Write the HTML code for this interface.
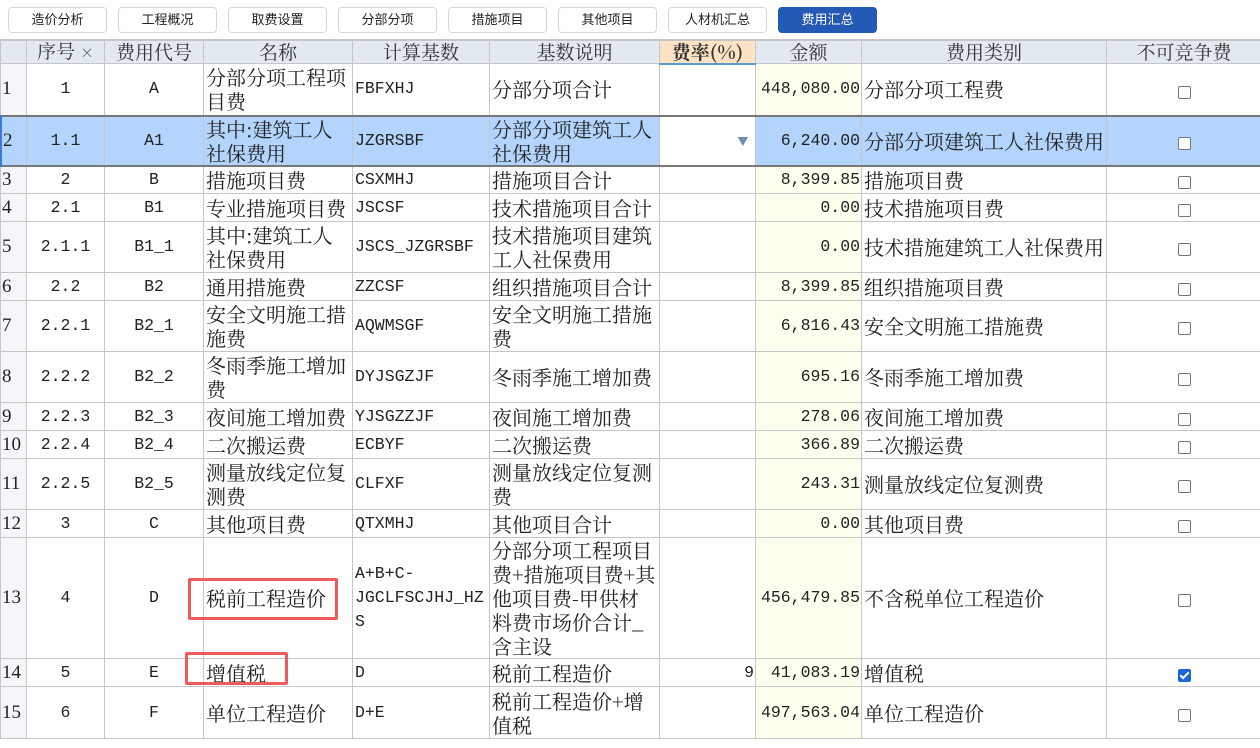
<!DOCTYPE html>
<html><head><meta charset="utf-8"><style>
*{box-sizing:border-box;margin:0;padding:0}
body{width:1260px;height:748px;background:#fff;position:relative;overflow:hidden;font-family:"Noto Serif CJK SC","Liberation Serif",serif;}
.btn{position:absolute;top:7px;width:99px;height:26px;border:1px solid #d6d6d6;border-radius:4px;background:#fff;font:13px "Liberation Sans","Noto Sans CJK SC",sans-serif;color:#222;text-align:center;line-height:24px}
.btn.on{background:#2559b6;color:#fff;border-color:#2559b6}
table{position:absolute;left:-1px;top:39px;border-collapse:collapse;table-layout:fixed;width:1261px}
td{border:1px solid #c6c6c6;font-size:20px;line-height:24px;color:#222;padding:0 2px;overflow:hidden;vertical-align:middle;word-break:break-all}
.m{font-family:"Liberation Mono","Noto Serif CJK SC",monospace;font-size:16.5px;white-space:nowrap}
.c{text-align:center}.r{text-align:right;padding-right:1px}
tr.h td{background:#e3e9f1;text-align:center;height:23px;line-height:20px;font-size:19px;color:#333;border-top:2px solid #c6c6c6;white-space:nowrap}
td.n{background:#f4f6f9;text-align:left;padding-left:1px;font-family:"Liberation Serif",serif;font-size:19px}
td.a{background:#fffff0}
tr.sel td{background:#b3d4fc;border-top:2px solid #777;border-bottom:2px solid #777}
tr.sel td.w{background:#fff}
.cb{display:inline-block;width:13px;height:13px;border:1px solid #777;border-radius:2px;background:#fff;vertical-align:middle}
.cb.k{background:#1a66d6;border-color:#1a66d6;position:relative}
.cb.k:after{content:"";position:absolute;left:3.5px;top:0.5px;width:3px;height:7px;border:solid #fff;border-width:0 2px 2px 0;transform:rotate(45deg)}
.red{position:absolute;border:3px solid #ef5a5a;border-radius:2px}
</style></head><body>
<div class="btn" style="left:8px">造价分析</div>
<div class="btn" style="left:118px">工程概况</div>
<div class="btn" style="left:228px">取费设置</div>
<div class="btn" style="left:338px">分部分项</div>
<div class="btn" style="left:448px">措施项目</div>
<div class="btn" style="left:558px">其他项目</div>
<div class="btn" style="left:668px">人材机汇总</div>
<div class="btn on" style="left:778px">费用汇总</div>
<table>
<colgroup><col style="width:26px"><col style="width:78px"><col style="width:99px"><col style="width:149px"><col style="width:137px"><col style="width:170px"><col style="width:96px"><col style="width:106px"><col style="width:245px"><col style="width:155px"></colgroup>
<tr class="h"><td></td><td>序号 <span style="font-size:14px">×</span></td><td>费用代号</td><td>名称</td><td>计算基数</td><td>基数说明</td><td style="background:#fde3c4;border-bottom:2px solid #5b9bd5;font-weight:bold">费率(%)</td><td>金额</td><td>费用类别</td><td>不可竞争费</td></tr>
<tr style="height:52px"><td class="n">1</td><td class="c m">1</td><td class="c m">A</td><td>分部分项工程项目费</td><td class="m">FBFXHJ</td><td>分部分项合计</td><td></td><td class="a r m">448,080.00</td><td>分部分项工程费</td><td class="c"><span class="cb"></span></td></tr>
<tr class="sel" style="height:49px"><td class="n" style="border-left:3px solid #3a7bd5">2</td><td class="c m">1.1</td><td class="c m">A1</td><td>其中:建筑工人社保费用</td><td class="m">JZGRSBF</td><td>分部分项建筑工人社保费用</td><td class="w r" style="color:#6a8fb5;font-size:11px">▼&nbsp;&nbsp;</td><td class="r m">6,240.00</td><td style="white-space:nowrap">分部分项建筑工人社保费用</td><td class="c"><span class="cb"></span></td></tr>
<tr style="height:28px"><td class="n">3</td><td class="c m">2</td><td class="c m">B</td><td>措施项目费</td><td class="m">CSXMHJ</td><td>措施项目合计</td><td></td><td class="a r m">8,399.85</td><td>措施项目费</td><td class="c"><span class="cb"></span></td></tr>
<tr style="height:28px"><td class="n">4</td><td class="c m">2.1</td><td class="c m">B1</td><td>专业措施项目费</td><td class="m">JSCSF</td><td>技术措施项目合计</td><td></td><td class="a r m">0.00</td><td>技术措施项目费</td><td class="c"><span class="cb"></span></td></tr>
<tr style="height:51px"><td class="n">5</td><td class="c m">2.1.1</td><td class="c m">B1_1</td><td>其中:建筑工人社保费用</td><td class="m">JSCS_JZGRSBF</td><td>技术措施项目建筑工人社保费用</td><td></td><td class="a r m">0.00</td><td style="white-space:nowrap">技术措施建筑工人社保费用</td><td class="c"><span class="cb"></span></td></tr>
<tr style="height:28px"><td class="n">6</td><td class="c m">2.2</td><td class="c m">B2</td><td>通用措施费</td><td class="m">ZZCSF</td><td>组织措施项目合计</td><td></td><td class="a r m">8,399.85</td><td>组织措施项目费</td><td class="c"><span class="cb"></span></td></tr>
<tr style="height:51px"><td class="n">7</td><td class="c m">2.2.1</td><td class="c m">B2_1</td><td>安全文明施工措施费</td><td class="m">AQWMSGF</td><td>安全文明施工措施费</td><td></td><td class="a r m">6,816.43</td><td>安全文明施工措施费</td><td class="c"><span class="cb"></span></td></tr>
<tr style="height:51px"><td class="n">8</td><td class="c m">2.2.2</td><td class="c m">B2_2</td><td>冬雨季施工增加费</td><td class="m">DYJSGZJF</td><td>冬雨季施工增加费</td><td></td><td class="a r m">695.16</td><td>冬雨季施工增加费</td><td class="c"><span class="cb"></span></td></tr>
<tr style="height:28px"><td class="n">9</td><td class="c m">2.2.3</td><td class="c m">B2_3</td><td>夜间施工增加费</td><td class="m">YJSGZZJF</td><td>夜间施工增加费</td><td></td><td class="a r m">278.06</td><td>夜间施工增加费</td><td class="c"><span class="cb"></span></td></tr>
<tr style="height:28px"><td class="n">10</td><td class="c m">2.2.4</td><td class="c m">B2_4</td><td>二次搬运费</td><td class="m">ECBYF</td><td>二次搬运费</td><td></td><td class="a r m">366.89</td><td>二次搬运费</td><td class="c"><span class="cb"></span></td></tr>
<tr style="height:51px"><td class="n">11</td><td class="c m">2.2.5</td><td class="c m">B2_5</td><td>测量放线定位复测费</td><td class="m">CLFXF</td><td>测量放线定位复测费</td><td></td><td class="a r m">243.31</td><td>测量放线定位复测费</td><td class="c"><span class="cb"></span></td></tr>
<tr style="height:28px"><td class="n">12</td><td class="c m">3</td><td class="c m">C</td><td>其他项目费</td><td class="m">QTXMHJ</td><td>其他项目合计</td><td></td><td class="a r m">0.00</td><td>其他项目费</td><td class="c"><span class="cb"></span></td></tr>
<tr style="height:120px"><td class="n">13</td><td class="c m">4</td><td class="c m">D</td><td>税前工程造价</td><td class="m" style="line-height:24px">A+B+C-<br>JGCLFSCJHJ_HZ<br>S</td><td>分部分项工程项目<br>费+措施项目费+其<br>他项目费-甲供材<br>料费市场价合计_<br>含主设</td><td></td><td class="a r m">456,479.85</td><td>不含税单位工程造价</td><td class="c"><span class="cb"></span></td></tr>
<tr style="height:28px"><td class="n">14</td><td class="c m">5</td><td class="c m">E</td><td>增值税</td><td class="m">D</td><td>税前工程造价</td><td class="r m">9</td><td class="a r m">41,083.19</td><td>增值税</td><td class="c"><span class="cb k"></span></td></tr>
<tr style="height:52px"><td class="n">15</td><td class="c m">6</td><td class="c m">F</td><td>单位工程造价</td><td class="m">D+E</td><td>税前工程造价+增<br>值税</td><td></td><td class="a r m">497,563.04</td><td>单位工程造价</td><td class="c"><span class="cb"></span></td></tr>
</table>
<div class="red" style="left:188px;top:578px;width:150px;height:42px"></div>
<div class="red" style="left:185px;top:652px;width:103px;height:33px"></div>
</body></html>
